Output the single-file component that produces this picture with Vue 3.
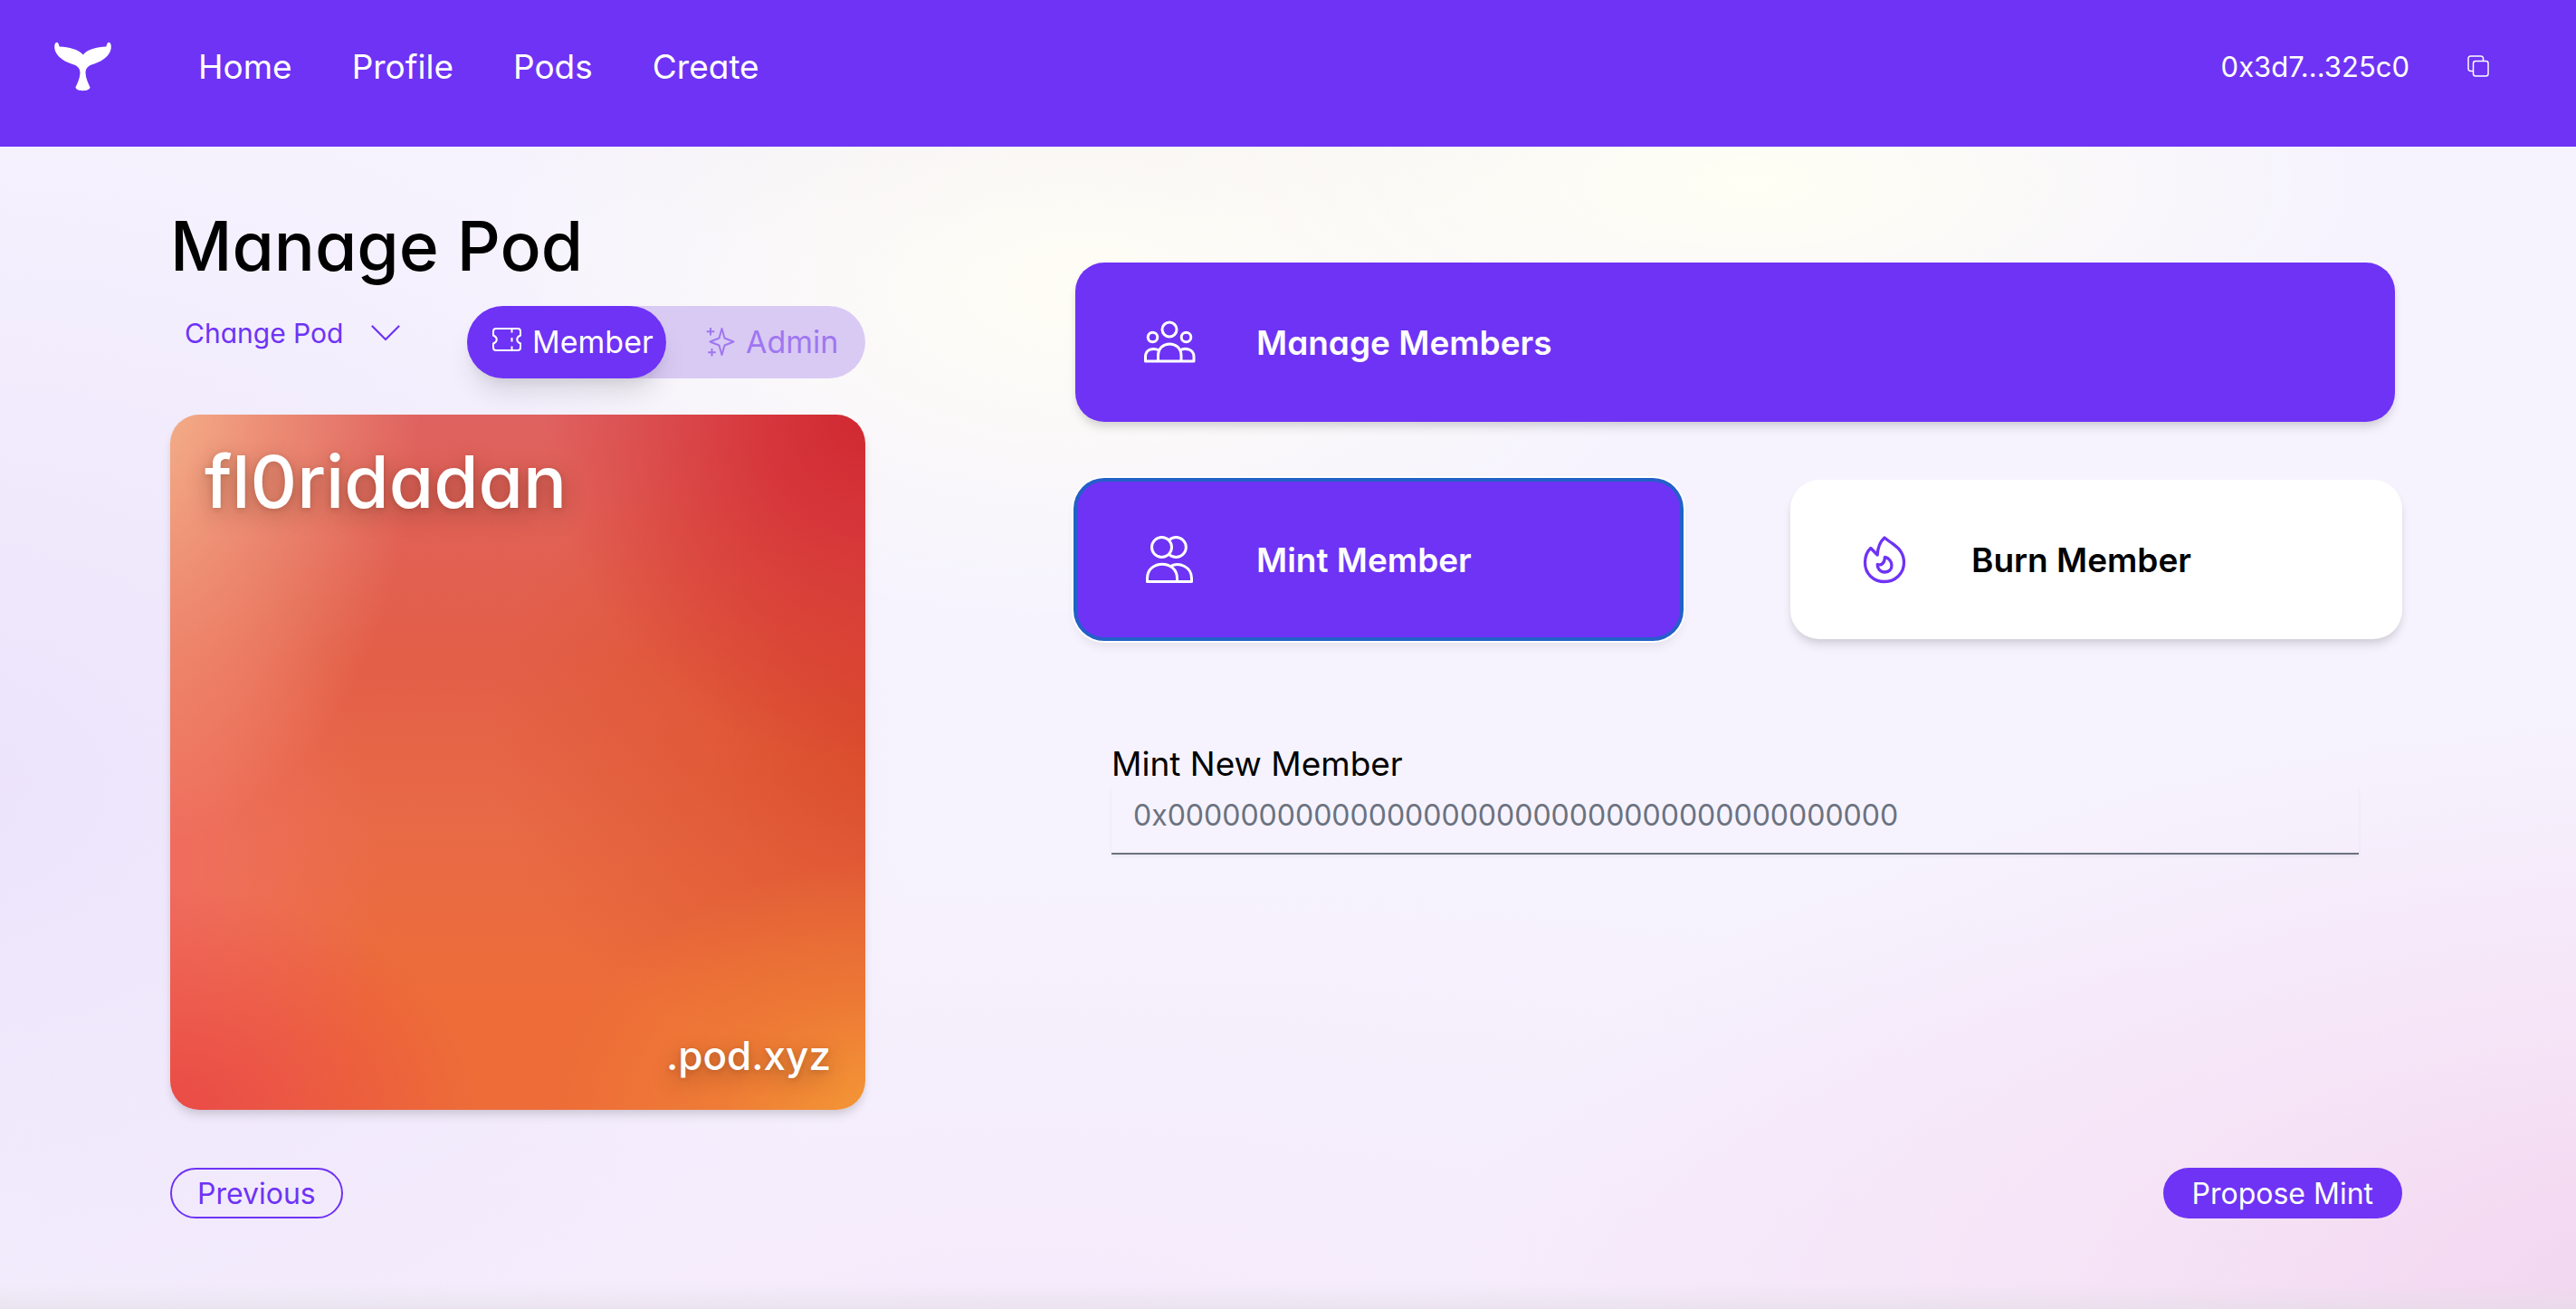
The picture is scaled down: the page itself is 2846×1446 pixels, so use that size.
<script setup>
import { ref } from 'vue'

const links = ['Home', 'Profile', 'Pods', 'Create']
const role = ref('member')
const address = ref('')
const placeholder = '0x' + '0'.repeat(40)
</script>

<template>
  <div class="page">
    <header class="topbar">
      <a class="logo" href="#" aria-label="Home page">
        <svg viewBox="32 48 188 164" width="63" height="55" fill="#fff">
          <path d="M40 50C33 52 32 60 33 70C36 92 58 110 88 121C108 127 117 134 117 152C116 170 108 186 102 199C103 206 114 210 126 210C138 210 149 206 150 199C144 186 136 170 135 152C135 134 144 127 164 121C194 110 216 92 219 70C220 60 219 52 212 50C207 50 206 56 203 64C170 66 142 72 127 91C110 72 82 66 49 64C46 56 45 50 40 50Z" />
        </svg>
      </a>
      <nav class="nav">
        <a v-for="link in links" :key="link" href="#">{{ link }}</a>
      </nav>
      <div class="account">
        <span>0x3d7...325c0</span>
        <button class="copy" type="button" aria-label="Copy address">
          <svg viewBox="0 0 24 24" width="24" height="24" fill="none" stroke="#fff" stroke-width="1.5">
            <path d="M6.5 17.5H3.5A2.5 2.5 0 0 1 1 15V3.5A2.5 2.5 0 0 1 3.5 1H15A2.5 2.5 0 0 1 17.5 3.5V6.5" />
            <rect x="6.5" y="6.5" width="16.5" height="16.5" rx="2.5" />
          </svg>
        </button>
      </div>
    </header>

    <main class="content">
      <div class="columns">
        <section class="pod">
          <h1>Manage Pod</h1>
          <div class="controls">
            <div class="picker">
              <select aria-label="Change Pod">
                <option>Change Pod</option>
              </select>
              <svg viewBox="0 0 32 18" width="32" height="18" fill="none" stroke="#6e33f5" stroke-width="2.2" stroke-linecap="round" stroke-linejoin="round">
                <path d="M1.5 1.5L16 16L30.5 1.5" />
              </svg>
            </div>
            <div class="toggle">
              <button type="button" :class="{ on: role === 'member' }" @click="role = 'member'">
                <svg viewBox="0 0 32 32" width="32" height="32" fill="none" stroke="currentColor" stroke-width="2">
                  <path d="M4 1H28A3 3 0 0 1 31 4V8.5C26 10.5 26 15.500 31 17.5V22A3 3 0 0 1 28 25H4A3 3 0 0 1 1 22V17.5C6 15.5 6 10.5 1 8.5V4A3 3 0 0 1 4 1Z" />
                  <path d="M21.500 1V5.5M21.5 11V15.5M21.5 20.5V25" />
                </svg>
                Member
              </button>
              <button type="button" :class="{ on: role === 'admin' }" @click="role = 'admin'">
                <svg viewBox="0 0 32 32" width="32" height="32" fill="none" stroke="currentColor" stroke-width="2" stroke-linejoin="round">
                  <path d="M17.500 1L20.5 11.5L30.5 15.500L20.5 19.5L17.500 30L14.5 19.500L4.5 15.5L14.5 11.5Z" />
                  <path d="M5 0V8.5M.7 4.300H9.3M6.5 23V31.5M2.2 27.2H10.8" />
                </svg>
                Admin
              </button>
            </div>
          </div>
          <div class="card">
            <span class="name">fl0ridadan</span>
            <span class="domain">.pod.xyz</span>
          </div>
        </section>

        <section class="actions">
          <button class="tile solid wide" type="button">
            <svg viewBox="0 0 64 64" width="64" height="64" fill="none" stroke="currentColor" stroke-width="3" stroke-linejoin="round">
              <circle cx="32" cy="18" r="8" />
              <circle cx="13.5" cy="26.5" r="5.3" />
              <circle cx="50.5" cy="26.5" r="5.3" />
              <path d="M19.5 53V47C19.5 29.5 45 29.5 45 47V53" />
              <path d="M20.5 41C14 37.500 5.5 40 5.5 48V53H59V48C59 40 50 37.500 43.5 41" />
            </svg>
            <span>Manage Members</span>
          </button>
          <div class="pair">
            <button class="tile solid focused" type="button">
              <svg viewBox="0 0 64 64" width="64" height="64" fill="none" stroke="currentColor" stroke-width="3" stroke-linejoin="round">
                <circle cx="23.5" cy="18.5" r="11" />
                <path d="M31.5 10.8A11 11 0 1 1 31.5 26.200" />
                <path d="M7.5 56.5V53C7.5 32 40.5 32 40.5 53V56.5Z" />
                <path d="M33 39.5C43 34.5 56.5 40 56.5 53V56.5H40.5" />
              </svg>
              <span>Mint Member</span>
            </button>
            <button class="tile light" type="button">
              <svg viewBox="0 0 64 64" width="64" height="64" fill="none" stroke="#6e33f5" stroke-width="3.3" stroke-linejoin="round">
                <path d="M32 8C26 13.5 24.5 19.5 24.2 27L16.8 19.5C12 24 10.500 29.5 10.5 35.5C10.5 48 20 56.5 32 56.5S53.5 47.5 53.5 35.5C53.5 23 45.5 18 39.5 13.5C36.5 11.5 34.5 10 32 8Z" />
                <path d="M32.5 29.5C41.5 31 43.5 46 32 46C27 46 24 42 24.2 37.5C29 39 32 36 32.5 29.5Z" />
              </svg>
              <span>Burn Member</span>
            </button>
          </div>
          <div class="field">
            <label for="new-member">Mint New Member</label>
            <input id="new-member" v-model="address" type="text" :placeholder="placeholder" />
          </div>
        </section>
      </div>

      <div class="footer">
        <button class="pill outline" type="button">Previous</button>
        <button class="pill filled" type="button">Propose Mint</button>
      </div>
    </main>
  </div>
</template>

<style>
body {
  margin: 0;
}
</style>

<style scoped>
.page {
  min-height: 100vh;
  box-sizing: border-box;
  font-family: Inter, "Open Sans", sans-serif;
  font-feature-settings: "cv11";
  font-size: 32px;
  color: #000;
  background:
    linear-gradient(0deg, rgba(225, 220, 228, 0.5), rgba(225, 220, 228, 0) 28px),
    radial-gradient(ellipse 50% 46% at 106% 100%, #f2d3ee, rgba(245, 220, 243, 0.7) 45%, rgba(247, 236, 251, 0) 100%),
    radial-gradient(ellipse 24% 18% at 68% 14%, #fffff4, rgba(255, 255, 244, 0) 100%),
    radial-gradient(ellipse 24% 26% at 42% 22%, rgba(255, 254, 244, 0.95), rgba(255, 254, 244, 0) 100%),
    radial-gradient(ellipse 30% 14% at 46% 8%, rgba(243, 238, 241, 0.9), rgba(244, 239, 243, 0) 100%),
    radial-gradient(ellipse 38% 55% at -2% 60%, #ece3fb, rgba(240, 232, 252, 0) 100%),
    radial-gradient(ellipse 70% 36% at 40% 100%, #f5eafb, rgba(246, 240, 252, 0) 100%),
    #f6f3fe;
}

button,
input,
select {
  font: inherit;
  font-feature-settings: inherit;
}

button {
  border: 0;
  padding: 0;
  cursor: pointer;
}

svg {
  display: block;
  flex: none;
}

.topbar {
  display: flex;
  align-items: center;
  height: 146px;
  padding: 0 96px 16px 60px;
  background: #6e33f5;
  color: #fff;
}

.nav {
  display: flex;
  gap: 66px;
  margin-left: 96px;
  font-size: 37px;
}

.nav a {
  color: #fff;
  text-decoration: none;
}

.account {
  display: flex;
  align-items: center;
  gap: 64px;
  margin-left: auto;
  font-size: 31px;
}

.copy {
  background: none;
}

.content {
  padding: 64px 192px 96px 188px;
}

.columns {
  display: grid;
  grid-template-columns: 768px 1fr;
  gap: 232px;
}

h1 {
  margin: 0;
  font-size: 75px;
  line-height: 92px;
  font-weight: 500;
}

.controls {
  display: flex;
  justify-content: space-between;
  align-items: flex-start;
  margin: 20px 0 40px;
}

.picker {
  display: flex;
  align-items: center;
  height: 60px;
  margin-left: 16px;
  gap: 30px;
}

.picker select {
  appearance: none;
  border: 0;
  padding: 0;
  background: none;
  color: #6e33f5;
  font-size: 30px;
}

.toggle {
  display: flex;
  width: 440px;
  border-radius: 40px;
  background: #d9caf4;
}

.toggle button {
  width: 50%;
  display: flex;
  align-items: center;
  gap: 12px;
  height: 80px;
  padding-left: 28px;
  border-radius: 40px;
  background: none;
  color: #9f77f0;
  font-size: 34px;
  line-height: 76px;
}

.toggle button + button {
  padding-left: 44px;
}

.toggle .on {
  background: #6e33f5;
  color: #fff;
  box-shadow: 0 20px 30px -6px rgba(0, 0, 0, 0.12), 0 8px 12px -4px rgba(0, 0, 0, 0.06);
}

.card {
  display: flex;
  flex-direction: column;
  justify-content: space-between;
  aspect-ratio: 1;
  box-sizing: border-box;
  padding: 28px 38px;
  border-radius: 32px;
  color: #fff;
  font-weight: 500;
  text-shadow: 0 8px 24px rgba(80, 40, 20, 0.4), 0 2px 6px rgba(80, 40, 20, 0.2);
  box-shadow: 0 8px 12px -2px rgba(0, 0, 0, 0.12), 0 4px 8px -2px rgba(0, 0, 0, 0.06);
  background:
    radial-gradient(ellipse 40% 66% at -4% -4%, #f6b68c, rgba(242, 160, 128, 0.7) 45%, rgba(236, 120, 100, 0) 100%),
    radial-gradient(ellipse 46% 50% at 100% 0%, #d02832, rgba(212, 46, 54, 0.8) 35%, rgba(220, 70, 60, 0) 100%),
    radial-gradient(ellipse 44% 32% at 0% 100%, #ea4a46, rgba(236, 80, 66, 0) 100%),
    radial-gradient(ellipse 50% 40% at 104% 104%, #f59e35, rgba(240, 140, 52, 0.5) 50%, rgba(236, 112, 52, 0) 100%),
    radial-gradient(ellipse 36% 56% at -6% 68%, #f16a62, rgba(240, 112, 98, 0.7) 40%, rgba(236, 104, 84, 0) 100%),
    radial-gradient(ellipse 60% 50% at 106% 46%, #d94a2a, rgba(220, 80, 44, 0.5) 50%, rgba(222, 84, 44, 0) 100%),
    linear-gradient(180deg, #df6260, #e35f48 35%, #e86a46 60%, #ed6c38 85%);
}

.name {
  font-size: 80px;
  line-height: 92px;
}

.domain {
  align-self: flex-end;
  font-size: 44px;
  line-height: 64px;
}

.actions {
  padding-top: 64px;
}

.tile {
  display: flex;
  align-items: center;
  gap: 64px;
  height: 176px;
  box-sizing: border-box;
  padding: 0 72px;
  border-radius: 32px;
  font-size: 37px;
  font-weight: 600;
  box-shadow: 0 8px 12px -2px rgba(0, 0, 0, 0.12), 0 4px 8px -2px rgba(0, 0, 0, 0.06);
}

.wide {
  width: calc(100% - 8px);
}

.solid {
  background: #6e33f5;
  color: #fff;
}

.light {
  background: #fff;
  color: #000;
}

.focused {
  box-shadow: inset 0 0 0 2px #2161c8, 0 0 0 2px #2161c8, 0 0 0 4px #fff, 0 8px 12px rgba(0, 0, 0, 0.08);
}

.pair {
  display: grid;
  grid-template-columns: 670fr 676fr;
  gap: 120px;
  margin-top: 64px;
}

.field {
  display: flex;
  flex-direction: column;
  margin: 112px 48px 0 40px;
}

.field label {
  font-size: 37px;
  line-height: 52px;
}

.field input {
  height: 74px;
  box-sizing: border-box;
  padding: 0 24px 12px;
  border: 0;
  border-bottom: 2px solid #6b7280;
  border-radius: 0;
  background: transparent;
  outline: none;
  box-shadow: 0 2px 4px rgba(0, 0, 0, 0.05);
}

.field input::placeholder {
  color: #6b7280;
  opacity: 1;
}

.footer {
  display: flex;
  justify-content: space-between;
  margin-top: 64px;
}

.pill {
  height: 56px;
  box-sizing: border-box;
  border-radius: 28px;
}

.outline {
  padding: 0 28px;
  border: 2px solid #6e33f5;
  background: none;
  color: #6e33f5;
}

.filled {
  padding: 0 32px;
  background: #6e33f5;
  color: #fff;
}
</style>
